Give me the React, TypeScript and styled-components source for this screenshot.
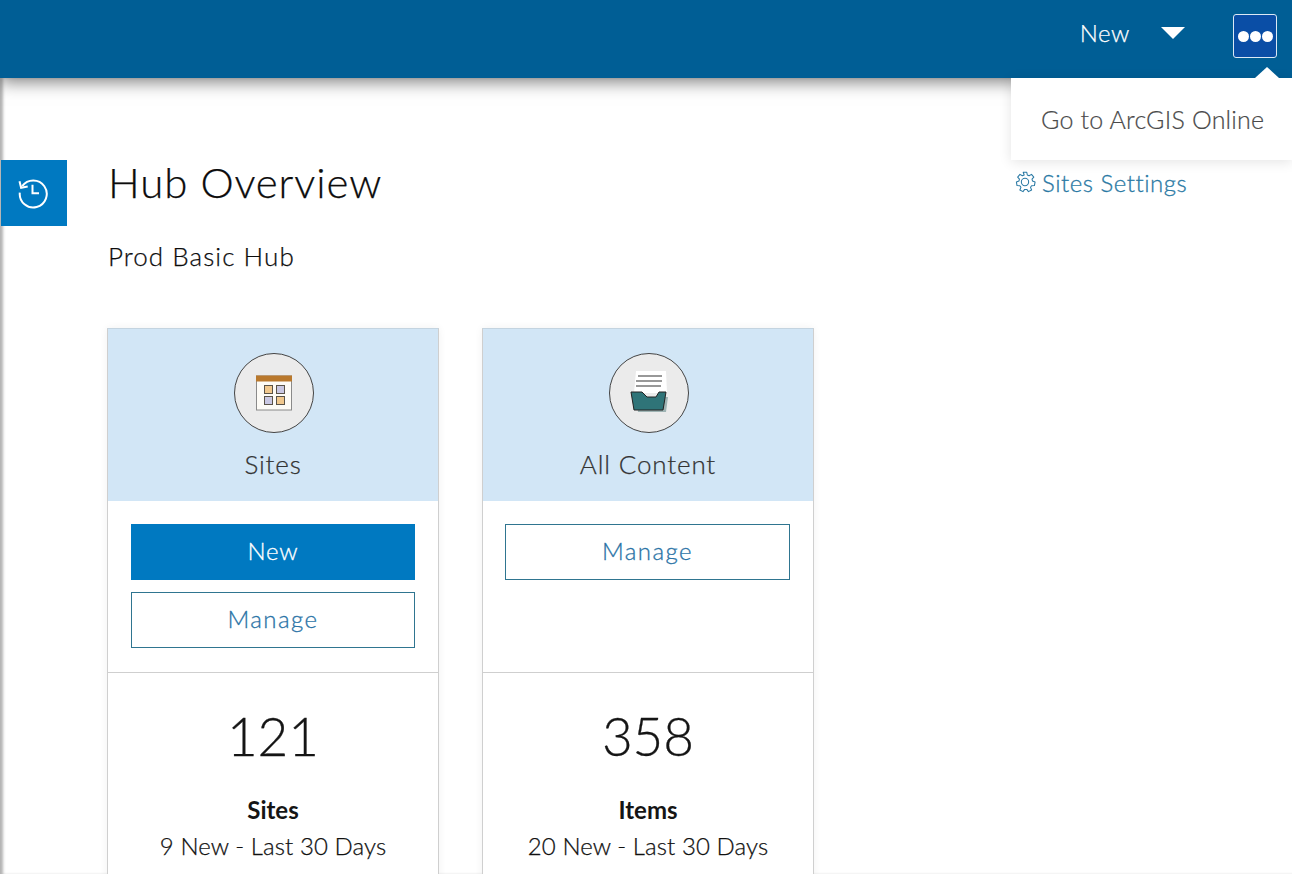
import React from "react"
import styled, { createGlobalStyle } from "styled-components"

const Global = createGlobalStyle`
  html, body {
    margin: 0;
    height: 874px;
    overflow: hidden;
    background: #fff;
    font-family: "Lato", "Liberation Sans", sans-serif;
  }
  * { box-sizing: border-box; }
`

const Page = styled.div`
  height: 874px;
  overflow: hidden;
  position: relative;
`

const TopBar = styled.header`
  height: 78px;
  background: #005e95;
  display: flex;
  align-items: center;
  justify-content: flex-end;
  padding: 0 15px 6px 0;
  box-shadow: 0 4px 16px rgba(0, 0, 0, 0.5);
  position: relative;
  z-index: 2;
`

const NewMenu = styled.div`
  display: flex;
  align-items: center;
  gap: 31px;
  margin: 0 48px 8px 0;
  color: #fff;
  font-size: 24px;
  font-weight: 300;
  letter-spacing: 0.6px;
  -webkit-text-stroke: 0.25px #fff;
`

const Caret = styled.span`
  width: 0;
  height: 0;
  border-left: 12px solid transparent;
  border-right: 12px solid transparent;
  border-top: 12px solid #fff;
  margin-top: 1px;
`

const DotsButton = styled.button`
  width: 44px;
  height: 44px;
  padding: 0;
  border: 1px solid #dbe9f5;
  border-radius: 3px;
  background: #0a4ea6;
  display: flex;
  align-items: center;
  justify-content: center;
  gap: 1px;
`

const Dot = styled.span`
  width: 11px;
  height: 11px;
  border-radius: 50%;
  background: #fff;
`

const Popover = styled.div`
  position: absolute;
  top: 78px;
  left: 1011px;
  width: 281px;
  height: 82px;
  background: #fff;
  box-shadow: 0 2px 12px rgba(0, 0, 0, 0.11);
  color: #4a4a4a;
  font-size: 25px;
  font-weight: 300;
  display: flex;
  align-items: center;
  padding-left: 30px;
  letter-spacing: 0.2px;
  -webkit-text-stroke: 0.2px #4a4a4a;
  z-index: 3;

  &::before {
    content: "";
    position: absolute;
    top: -11px;
    left: 244px;
    border-left: 12px solid transparent;
    border-right: 12px solid transparent;
    border-bottom: 11px solid #fff;
  }
`

const Body = styled.div`
  display: flex;
  align-items: flex-start;
  padding-top: 82px;
  height: 796px;
  box-shadow: inset 4px 0 3px -1px rgba(0, 0, 0, 0.3);
`

const HistoryTab = styled.div`
  width: 66px;
  height: 66px;
  margin-left: 1px;
  flex: none;
  background: #0079c1;
  display: flex;
  align-items: center;
  justify-content: center;
`

const Main = styled.main`
  flex: 1;
  padding-left: 40px;
  min-width: 0;
`

const TitleRow = styled.div`
  display: flex;
  align-items: center;
  height: 44px;
`

const Title = styled.h1`
  margin: 0 0 0 1px;
  font-size: 42px;
  font-weight: 300;
  letter-spacing: 0.87px;
  color: #0c0c0c;
  width: 906px;
  flex: none;
  -webkit-text-stroke: 0.25px #0c0c0c;
`

const SettingsLink = styled.a`
  display: flex;
  align-items: center;
  gap: 6px;
  color: #2a79a4;
  font-size: 24px;
  font-weight: 300;
  letter-spacing: 0.52px;
  -webkit-text-stroke: 0.3px #2a79a4;
`

const HubName = styled.p`
  margin: 36px 0 0 1px;
  height: 32px;
  line-height: 32px;
  font-size: 26px;
  letter-spacing: 1.05px;
  font-weight: 300;
  color: #0c0c0c;
  -webkit-text-stroke: 0.25px #0c0c0c;
`

const Cards = styled.div`
  display: flex;
  gap: 43px;
  margin-top: 56px;
`

const Card = styled.section`
  width: 332px;
  flex: none;
  border: 1px solid #cfcfcf;
  border-top-color: #c4d4e0;
  box-shadow: 0 0 8px rgba(0, 0, 0, 0.06);
  background: #fff;
`

const CardHead = styled.div`
  height: 172px;
  background: #d2e6f6;
  display: flex;
  flex-direction: column;
  align-items: center;
  padding-top: 24px;
`

const Badge = styled.div`
  width: 80px;
  height: 80px;
  margin-left: 2px;
  border-radius: 50%;
  background: #ebebeb;
  border: 1px solid #444;
  display: flex;
  align-items: center;
  justify-content: center;
`

const CardLabel = styled.div`
  margin-top: 15px;
  font-size: 26px;
  line-height: 32px;
  font-weight: 300;
  letter-spacing: 0.85px;
  color: #333;
  -webkit-text-stroke: 0.25px #333;
`

const Actions = styled.div<{ $inset: number }>`
  height: 172px;
  border-bottom: 1px solid #cfcfcf;
  padding: 23px 23px 0 ${p => p.$inset}px;
  display: flex;
  flex-direction: column;
  gap: 12px;
`

const ActionButton = styled.button<{ $primary?: boolean }>`
  height: 56px;
  width: 100%;
  padding: 0 0 3px;
  font-family: inherit;
  font-size: 24px;
  font-weight: 300;
  letter-spacing: ${p => (p.$primary ? "0.8px" : "1.4px")};
  border: 1px solid ${p => (p.$primary ? "#0079c1" : "#2f7590")};
  background: ${p => (p.$primary ? "#0079c1" : "#fff")};
  color: ${p => (p.$primary ? "#fff" : "#2a73a6")};
  -webkit-text-stroke: 0.3px ${p => (p.$primary ? "#fff" : "#2a73a6")};
`

const Stats = styled.div`
  display: flex;
  flex-direction: column;
  align-items: center;
  padding-top: 31px;
  height: 300px;
  color: #151515;
`

const Count = styled.div`
  font-size: 53px;
  line-height: 64px;
  font-weight: 300;
  -webkit-text-stroke: 0.3px #151515;
`

const StatName = styled.div`
  margin-top: 27px;
  font-size: 24px;
  line-height: 30px;
  font-weight: 700;
`

const StatNote = styled.div`
  margin-top: 6px;
  font-size: 24px;
  line-height: 30px;
  font-weight: 300;
  letter-spacing: 0.08px;
  color: #111;
  -webkit-text-stroke: 0.25px #111;
`

function HistoryIcon() {
  return (
    <svg width="32" height="32" viewBox="0 0 32 32" fill="none" stroke="#fff" strokeWidth="2">
      <g transform="translate(-1 -1.3)">
        <path d="M5.2 10.5A13.5 13.5 0 1 1 2.8 17" />
        <path d="M2.5 5.5l1.6 6.6 6.6-1.2" />
        <path d="M15.5 9v8.5h6.5" />
      </g>
    </svg>
  )
}

function GearIcon() {
  return (
    <svg width="22" height="22" viewBox="0 0 21 21" fill="none" stroke="#2a79a4" strokeWidth="1">
      <circle cx="10.5" cy="10.5" r="3.5" />
      <path d="M8.8 1.2h3.4l.5 2.6 1.7.8 2.3-1.4 2.2 2.6-1.7 2 .5 1.8 2.4 1-.6 3.3-2.7.1-1 1.6 1 2.5-3 1.6-1.6-2.1h-2l-1.6 2.1-3-1.6 1-2.5-1-1.6-2.7-.1-.6-3.3 2.4-1 .5-1.8-1.7-2 2.2-2.6 2.3 1.4 1.7-.8z" strokeLinejoin="round" />
    </svg>
  )
}

function SitesIcon() {
  return (
    <svg width="36" height="36" viewBox="0 0 36 36">
      <rect x="0.5" y="1" width="35" height="34" fill="#fdfbf6" stroke="#8a8a8a" />
      <rect x="0" y="0.5" width="36" height="6" fill="#b9782c" />
      <rect x="8.5" y="10.5" width="8" height="8" fill="#f1c88d" stroke="#5a5348" />
      <rect x="20.5" y="10.5" width="8" height="8" fill="#c9c7e2" stroke="#5a5348" />
      <rect x="8.5" y="21.5" width="8" height="8" fill="#c9c7e2" stroke="#5a5348" />
      <rect x="20.5" y="21.5" width="8" height="8" fill="#f1c88d" stroke="#5a5348" />
    </svg>
  )
}

function ContentIcon() {
  return (
    <svg width="38" height="44" viewBox="0 0 38 44">
      <path d="M6 0h30l1 22H4z" fill="#fff" />
      <path d="M8 5h24M6 10h26M6 15h25" stroke="#777" strokeWidth="1.4" />
      <path d="M6 26h32l-2 15H8z" fill="#7f9c9c" opacity="0.7" />
      <path d="M1 21h11l5 5h9l3-5h7l-3 18H4z" fill="#2f7478" stroke="#222" strokeWidth="1" />
    </svg>
  )
}

export default function App() {
  return (
    <Page>
      <Global />
      <TopBar>
        <NewMenu>
          New
          <Caret />
        </NewMenu>
        <DotsButton aria-label="More">
          <Dot />
          <Dot />
          <Dot />
        </DotsButton>
      </TopBar>
      <Popover>Go to ArcGIS Online</Popover>
      <Body>
        <HistoryTab>
          <HistoryIcon />
        </HistoryTab>
        <Main>
          <TitleRow>
            <Title>Hub Overview</Title>
            <SettingsLink>
              <GearIcon />
              Sites Settings
            </SettingsLink>
          </TitleRow>
          <HubName>Prod Basic Hub</HubName>
          <Cards>
            <Card>
              <CardHead>
                <Badge>
                  <SitesIcon />
                </Badge>
                <CardLabel>Sites</CardLabel>
              </CardHead>
              <Actions $inset={23}>
                <ActionButton $primary>New</ActionButton>
                <ActionButton>Manage</ActionButton>
              </Actions>
              <Stats>
                <Count>121</Count>
                <StatName>Sites</StatName>
                <StatNote>9 New - Last 30 Days</StatNote>
              </Stats>
            </Card>
            <Card>
              <CardHead>
                <Badge>
                  <ContentIcon />
                </Badge>
                <CardLabel>All Content</CardLabel>
              </CardHead>
              <Actions $inset={22}>
                <ActionButton>Manage</ActionButton>
              </Actions>
              <Stats>
                <Count>358</Count>
                <StatName>Items</StatName>
                <StatNote>20 New - Last 30 Days</StatNote>
              </Stats>
            </Card>
          </Cards>
        </Main>
      </Body>
    </Page>
  )
}
